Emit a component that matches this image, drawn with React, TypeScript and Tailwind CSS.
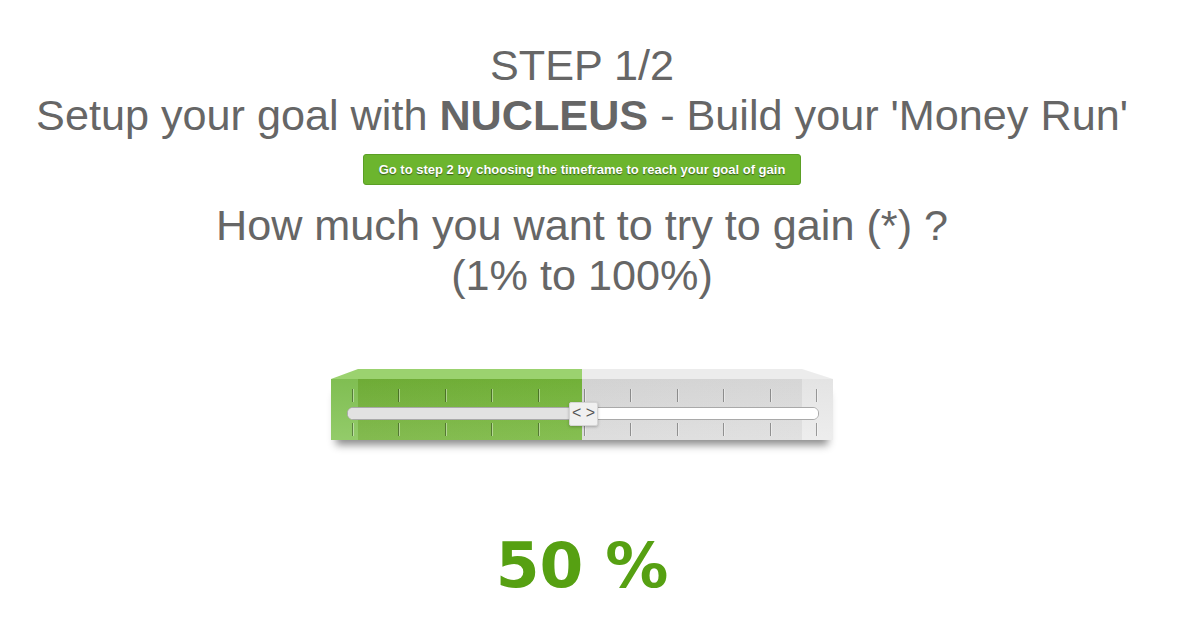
import React from "react";

const ticks = Array.from({ length: 11 });

function TickRow() {
  return (
    <div className="ml-[21px] mr-[15px] flex h-[13px] justify-between">
      {ticks.map((_, i) => (
        <div key={i} className="flex h-full">
          <div className="h-full w-px bg-black/35" />
          <div className="h-full w-px bg-white/40" />
        </div>
      ))}
    </div>
  );
}

function Slider() {
  return (
    <div className="mx-auto w-[502px]">
      <div className="h-[10px] w-full bg-[linear-gradient(to_right,#9bd26f_0,#9bd26f_251px,#ececec_251px,#ececec_100%)] [clip-path:polygon(27px_0,471px_0,100%_100%,0_100%)]" />
      <div className="relative h-[61px] w-full pt-[10px] shadow-[0_10px_8px_-5px_rgba(0,0,0,0.45)] bg-[linear-gradient(to_bottom,rgba(0,0,0,0.03),rgba(255,255,255,0.12)),linear-gradient(to_right,#84c455_0,#84c455_27px,#72b138_27px,#75b63a_251px,#d9d9d9_251px,#dddddd_471px,#ebebeb_471px,#ebebeb_100%)]">
        <TickRow />
        <div className="ml-[16px] mt-[5px] flex h-[13px] w-[472px] overflow-hidden rounded-[6px] border border-[#a9a9a9] bg-white shadow-[inset_0_1px_2px_rgba(0,0,0,0.15)]">
          <div className="h-full w-[236px] bg-[#e2e2e2]" />
          <div className="h-full flex-1 bg-white" />
        </div>
        <div className="mt-[3px]">
          <TickRow />
        </div>
        <div className="absolute left-[238px] top-[23px] flex h-[24px] w-[29px] items-center justify-center rounded-[2px] border border-[#d4d4d4] bg-[#f0f0f0] pb-[2px] text-[16px] leading-none whitespace-nowrap text-[#555] shadow-[0_1px_3px_rgba(0,0,0,0.25)]">
          &lt; &gt;
        </div>
      </div>
    </div>
  );
}

export default function App() {
  return (
    <div className="min-h-[624px] w-full bg-white [font-family:'Liberation_Sans',Arial,sans-serif]">
      <div className="w-[1164px] pt-[40px] text-center text-[#666666]">
        <div className="text-[43.2px] leading-[50px]">STEP 1/2</div>
        <div className="text-[43.2px] leading-[50px]">
          Setup your goal with <b className="font-bold">NUCLEUS</b> - Build your 'Money Run'
        </div>
        <div className="mt-[14px] flex justify-center">
          <button className="h-[31px] w-[438px] rounded-[3px] border border-[#5b9f25] bg-[#6cb52e] text-[13px] font-bold text-white [text-shadow:0_1px_1px_rgba(0,0,0,0.5)]">
            Go to step 2 by choosing the timeframe to reach your goal of gain
          </button>
        </div>
        <div className="mt-[15px] text-[43.2px] leading-[50px]">
          How much you want to try to gain (*) ?
          <br />
          (1% to 100%)
        </div>
        <div className="mt-[69px]">
          <Slider />
        </div>
        <div className="mt-[90px] text-[63px] font-bold leading-[72px] text-[#56a012] [font-family:'DejaVu_Sans',sans-serif]">50 %</div>
      </div>
    </div>
  );
}
